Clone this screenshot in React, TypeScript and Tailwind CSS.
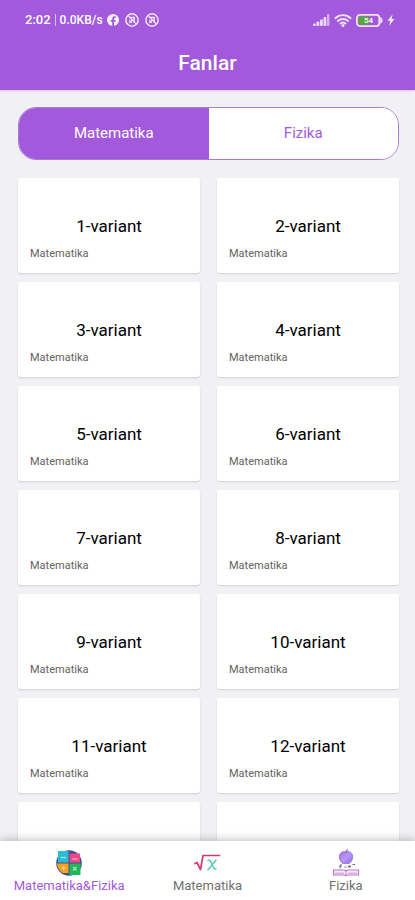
import React, { useState } from "react";

type Subject = "Matematika" | "Fizika";

const subjects: Subject[] = ["Matematika", "Fizika"];
const variants = Array.from({ length: 14 }, (_, i) => i + 1);

const SignalIcon = () => (
  <svg width="17" height="12" viewBox="0 0 17 12" fill="#ead9f8">
    <rect x="0" y="9.5" width="2.8" height="2.5" rx="0.8" />
    <rect x="3.5" y="7.5" width="2.8" height="4.5" rx="0.8" />
    <rect x="7" y="5.500" width="2.8" height="6.500" rx="0.8" />
    <rect x="10.5" y="3" width="2.8" height="9" rx="0.8" />
    <rect x="14" y="0" width="2.400" height="12" rx="0.8" fillOpacity="0.7" />
  </svg>
);

const WifiIcon = () => (
  <svg width="18" height="13" viewBox="0 0 18 13" fill="none" stroke="#f0e3fb" strokeWidth="1.900" strokeLinecap="round">
    <path d="M1.400 4.200a11 11 0 0 1 15.200 0" />
    <path d="M3.900 7a7.400 7.400 0 0 1 10.200 0" />
    <path d="M6.400 9.600a3.800 3.800 0 0 1 5.200 0" />
    <circle cx="9" cy="11.500" r="0.600" fill="#f0e3fb" />
  </svg>
);

const BatteryIcon = () => (
  <svg width="27" height="13" viewBox="0 0 27 13">
    <rect x="0.900" y="0.900" width="22.400" height="11.200" rx="3" fill="none" stroke="#f0e3fb" strokeWidth="1.800" />
    <rect x="2.600" y="2.600" width="10.500" height="7.800" rx="1" fill="#58a836" />
    <path d="M24.200 3c1.600.7 2.400 2 2.400 3.500s-.8 2.800-2.400 3.500z" fill="#f0e3fb" />
    <text x="12.500" y="9.300" textAnchor="middle" fontSize="8" fontWeight="700" fill="#f4ecfc">
      54
    </text>
  </svg>
);

const BoltIcon = () => (
  <svg width="8" height="12" viewBox="0 0 8 12" fill="#f4ecfc">
    <path d="M5.600 0.300L0.600 6.700h2.700L2.200 11.700 7.400 5H4.600z" />
  </svg>
);

const FacebookIcon = () => (
  <svg width="12" height="12" viewBox="0 0 12 12">
    <circle cx="6" cy="6" r="6" fill="#f6effd" />
    <path
      d="M5.200 12V7.700H3.700V6h1.500V4.800c0-1.600.9-2.500 2.300-2.500.5 0 1 .1 1.200.1V4h-.8c-.7 0-.9.4-.9.900V6h1.600l-.3 1.700H7V12z"
      fill="#a259dc"
    />
  </svg>
);

const NotifyIcon = () => (
  <svg width="14" height="14" viewBox="0 0 13 13" fill="none" stroke="#f0e3fb">
    <circle cx="6.500" cy="6.500" r="5.700" strokeWidth="1.400" />
    <path d="M3.800 4.200h4.700v4.700" strokeWidth="1.400" />
    <path d="M3.300 2.800l7 7.300M3.900 6.800l2.400 2.400M4 9.400l3.200-3.300" strokeWidth="1.200" />
  </svg>
);

const MixedIcon = () => (
  <svg width="28" height="28" viewBox="0 0 28 28">
    <circle cx="14" cy="14" r="12.800" fill="#41508f" />
    <path d="M3 2h10.500v11.500H3z" fill="#2bbdd3" />
    <path d="M14.500 4.500H25v9H14.500z" fill="#ee4688" />
    <path d="M2 14.500h11.500V24H7.500a13 13 0 0 1-5.500-9.500z" fill="#f9a11f" />
    <path d="M14.500 14.500H25.500V26H14.500z" fill="#1eb85a" />
    <g fill="none" stroke="#fff" strokeOpacity="0.600" strokeWidth="1.200">
      <path d="M6 8.500h5" />
      <path d="M17.500 10h5" />
      <path d="M6.500 19h4M8.500 17v4" />
      <path d="M18 18l3.500 3.500M21.500 18L18 21.500" />
    </g>
  </svg>
);

const RootIcon = () => (
  <svg width="28" height="28" viewBox="0 0 28 28" fill="none" strokeLinecap="round" strokeLinejoin="round">
    <path d="M2 14.500l2-1L7.500 20.500 10 6.500H26.500" stroke="#d93866" strokeWidth="1.700" />
    <path d="M15 11.500c1.500-.8 2.500.2 3.200 2l2.300 5.200c.6 1.300 1.400 1.600 2.400 1" stroke="#5bc8c2" strokeWidth="1.600" />
    <path d="M23 11.300l-8 9.500" stroke="#5bc8c2" strokeWidth="1.600" />
  </svg>
);

const AppleBookIcon = () => (
  <svg width="28" height="28" viewBox="0 0 28 28" fill="none">
    <defs>
      <linearGradient id="apple" x1="0" y1="0" x2="1" y2="1">
        <stop offset="0" stopColor="#b06be0" />
        <stop offset="0.500" stopColor="#b19af5" />
        <stop offset="1" stopColor="#8470dc" />
      </linearGradient>
    </defs>
    <path
      d="M14 3.200c2.400-1.300 6.600-.2 6.600 4.600 0 3.600-2.400 6.800-4.600 6.800-.8 0-1.300-.3-2-.3s-1.200.3-2 .3c-2.200 0-4.600-3.200-4.600-6.800C7.400 3 11.600 1.900 14 3.200z"
      fill="url(#apple)"
      stroke="#8d62cf"
      strokeWidth="0.800"
    />
    <path d="M14 3.400c0-1.400.6-2.200 1.800-2.900" stroke="#7561c9" strokeWidth="1.200" />
    <path d="M8 16v3.500M8 16h2M8 17.500h1.500M12.500 18h2M16 18.500l1-2 1 2 1-2M20.500 15.500h2.500" stroke="#7a6090" strokeWidth="1" />
    <path d="M1.500 21H12.500l1.500 1 1.500-1H26.500v5H15l-1 .8-1-.8H1.500z" fill="#f8eafb" stroke="#bd79c8" strokeWidth="1.200" />
    <path d="M14 22v4M3 24.200H12M16 24.200h9" stroke="#c78bd1" strokeWidth="0.900" />
  </svg>
);

const tabs = [
  { label: "Matematika&Fizika", icon: <MixedIcon /> },
  { label: "Matematika", icon: <RootIcon /> },
  { label: "Fizika", icon: <AppleBookIcon /> },
];

const VariantCard: React.FC<{ number: number; subject: Subject }> = ({ number, subject }) => (
  <button className="flex h-[95px] flex-col rounded-[3px] bg-white px-3 pt-9 text-left shadow-[0_1px_2px_rgba(0,0,0,0.14)]">
    <span className="w-full text-center text-[17px] leading-6 text-black">{number}-variant</span>
    <span className="mt-2 text-[11px] leading-4 text-[#626262]">{subject}</span>
  </button>
);

export default function App() {
  const [subject, setSubject] = useState<Subject>("Matematika");
  const [activeTab, setActiveTab] = useState(0);

  return (
    <div className="flex h-screen flex-col overflow-hidden bg-[#f1f0f5] font-['Roboto',sans-serif]">
      <header className="shrink-0 bg-[#a259dc] pb-3 text-white shadow-[0_1px_2px_rgba(162,89,220,0.3)]">
        <div className="flex h-10 items-center justify-between pr-5 pl-[25px]">
          <div className="flex items-center gap-1.5">
            <div className="flex items-center gap-1">
              <span className="text-[13px] font-medium">2:02</span>
              <span className="h-3 w-px bg-white/60" />
              <span className="text-[12px] font-medium">0.0KB/s</span>
              <FacebookIcon />
            </div>
            <NotifyIcon />
            <NotifyIcon />
          </div>
          <div className="flex items-center gap-1">
            <SignalIcon />
            <WifiIcon />
            <BatteryIcon />
            <BoltIcon />
          </div>
        </div>
        <h1 className="pt-2 text-center text-[21px] leading-[30px] font-medium">Fanlar</h1>
      </header>

      <main className="min-h-0 flex-1 overflow-y-auto pt-[17px] pr-4 pb-4 pl-[18px] [scrollbar-width:none]">
        <div className="flex h-[53px] overflow-hidden rounded-[18px] border border-[#a97ccf] bg-white">
          {subjects.map((name) => (
            <button
              key={name}
              onClick={() => setSubject(name)}
              className={`flex-1 text-[15px] ${subject === name ? "bg-[#a259dc] text-white" : "bg-white text-[#a259dc]"}`}
            >
              {name}
            </button>
          ))}
        </div>

        <div className="mt-[18px] grid grid-cols-2 gap-x-[17px] gap-y-[9px]">
          {variants.map((n) => (
            <VariantCard key={n} number={n} subject={subject} />
          ))}
        </div>
      </main>

      <nav className="relative grid h-[59px] shrink-0 grid-cols-3 bg-white shadow-[0_-2px_8px_rgba(0,0,0,0.22)]">
        {tabs.map((tab, i) => (
          <button
            key={tab.label}
            onClick={() => setActiveTab(i)}
            className={`flex flex-col items-center pt-2 text-[13px] leading-[18px] ${
              activeTab === i ? "text-[#a259dc]" : "text-[#707070]"
            }`}
          >
            {tab.icon}
            <span className="whitespace-nowrap">{tab.label}</span>
          </button>
        ))}
      </nav>
    </div>
  );
}
